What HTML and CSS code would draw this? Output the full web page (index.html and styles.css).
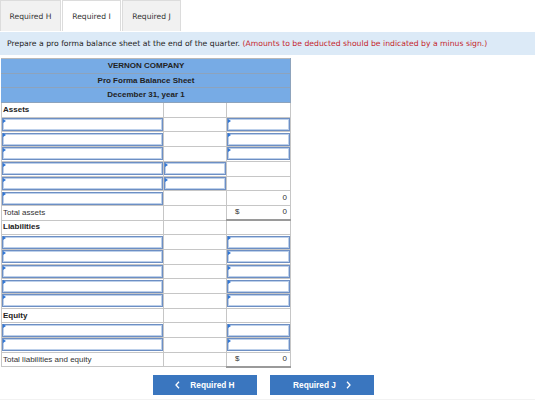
FILE: index.html
```html
<!DOCTYPE html>
<html lang="en">

<head>
    <meta charset="UTF-8">
    <title>Pro Forma Balance Sheet</title>
    <link rel="stylesheet" href="styles.css">
</head>

<body>
    <div class="tabs">
        <div class="tab">Required H</div>
        <div class="tab active">Required I</div>
        <div class="tab">Required J</div>
    </div>

    <div class="instructions">
        Prepare a pro forma balance sheet at the end of the quarter.
        <span class="note">(Amounts to be deducted should be indicated by a minus sign.)</span>
    </div>

    <table class="sheet">
        <colgroup>
            <col class="c1">
            <col class="c2">
            <col class="c3">
        </colgroup>
        <tr class="head first"><td colspan="3">VERNON COMPANY</td></tr>
        <tr class="head"><td colspan="3">Pro Forma Balance Sheet</td></tr>
        <tr class="head"><td colspan="3">December 31, year 1</td></tr>

        <tr><td class="label bold">Assets</td><td></td><td></td></tr>
        <tr><td class="in"><input type="text"></td><td></td><td class="in"><input type="text"></td></tr>
        <tr><td class="in"><input type="text"></td><td></td><td class="in"><input type="text"></td></tr>
        <tr><td class="in"><input type="text"></td><td></td><td class="in"><input type="text"></td></tr>
        <tr><td class="in"><input type="text"></td><td class="in"><input type="text"></td><td></td></tr>
        <tr><td class="in"><input type="text"></td><td class="in"><input type="text"></td><td></td></tr>
        <tr><td class="in"><input type="text"></td><td></td><td class="num"><span></span><span>0</span></td></tr>
        <tr><td class="label">Total assets</td><td></td><td class="num total"><span>$</span><span>0</span></td></tr>

        <tr><td class="label bold">Liabilities</td><td></td><td></td></tr>
        <tr><td class="in"><input type="text"></td><td></td><td class="in"><input type="text"></td></tr>
        <tr><td class="in"><input type="text"></td><td></td><td class="in"><input type="text"></td></tr>
        <tr><td class="in"><input type="text"></td><td></td><td class="in"><input type="text"></td></tr>
        <tr><td class="in"><input type="text"></td><td></td><td class="in"><input type="text"></td></tr>
        <tr><td class="in"><input type="text"></td><td></td><td class="in"><input type="text"></td></tr>

        <tr><td class="label bold">Equity</td><td></td><td></td></tr>
        <tr><td class="in"><input type="text"></td><td></td><td class="in"><input type="text"></td></tr>
        <tr><td class="in"><input type="text"></td><td></td><td class="in"><input type="text"></td></tr>
        <tr><td class="label">Total liabilities and equity</td><td></td><td class="num total"><span>$</span><span>0</span></td></tr>
    </table>

    <div class="nav">
        <button class="navbtn">
            <svg class="chev" width="5" height="8" viewBox="0 0 5 8"><path d="M4 0.8 L1 4 L4 7.2" fill="none" stroke="#fff" stroke-width="1.3"/></svg>
            Required H
        </button>
        <button class="navbtn">
            Required J
            <svg class="chev" width="5" height="8" viewBox="0 0 5 8"><path d="M1 0.8 L4 4 L1 7.2" fill="none" stroke="#fff" stroke-width="1.3"/></svg>
        </button>
    </div>
    <div class="rule"></div>
</body>

</html>
```

FILE: styles.css
```css
body {
    margin: 0;
    font-family: "DejaVu Sans", Verdana, sans-serif;
    color: #222;
    background-color: #fff;
}

/* tab strip */

.tabs {
    display: flex;
    height: 31px;
}

.tab {
    width: 59px;
    box-sizing: border-box;
    border: 1px solid #dcdcdc;
    border-bottom: none;
    background-color: #f1f1f1;
    font-size: 7.6px;
    line-height: 31px;
    text-align: center;
    color: #333;
}

.tab + .tab {
    margin-left: 1px;
}

.tab:first-child {
    width: 61px;
}

.tab.active {
    background-color: #fff;
}

.instructions {
    width: 535px;
    height: 23px;
    margin-top: 1px;
    padding-left: 7px;
    box-sizing: border-box;
    background-color: #dceaf7;
    font-size: 7.7px;
    line-height: 24px;
    color: #222;
}

.note {
    color: #c4262e;
}

/* balance sheet */

.sheet {
    margin: 3px 0 0 1px;
    border-collapse: collapse;
    table-layout: fixed;
    width: 289px;
    font-family: "Liberation Sans", Arial, sans-serif;
    font-size: 8px;
    color: #333;
}

.c1 {
    width: 162px;
}

.c2 {
    width: 63px;
}

.c3 {
    width: 64px;
}

.sheet tr {
    height: 14.7px;
}

.sheet td {
    padding: 0;
    border: 1px solid #c6c6c6;
    vertical-align: middle;
    line-height: 10px;
}

.head td {
    background-color: #77abe5;
    border: 1px solid #8da3bc;
    border-left-color: #77abe5;
    text-align: center;
    font-weight: bold;
    color: #222;
}

.head.first td {
    border-top-color: #b9b9b9;
}

.label {
    padding-left: 1px !important;
}

.bold {
    font-weight: bold;
    color: #222;
}

.in {
    position: relative;
}

.in input {
    display: block;
    width: 100%;
    height: 13px;
    margin: 0;
    padding: 0;
    box-sizing: border-box;
    border: 1px solid #6d8fc4;
    box-shadow: inset 0 0 0 1px #bdd0ea;
    background-color: #fff;
}

/* little marker in the corner of each entry box */
.in::before {
    content: "";
    position: absolute;
    left: 1px;
    top: 1px;
    border-left: 3px solid #2f77d6;
    border-top: 2px solid transparent;
    border-bottom: 2px solid transparent;
}

.num span:first-child {
    float: left;
    padding-left: 8px;
}

.num span:last-child {
    float: right;
    padding-right: 3px;
}

.total {
    border-bottom: 2px solid #9a9a9a !important;
}

/* navigation */

.nav {
    display: flex;
    justify-content: center;
    gap: 13px;
    width: 527px;
    margin-top: 7px;
}

.navbtn {
    display: flex;
    align-items: center;
    justify-content: center;
    gap: 10px;
    width: 104px;
    height: 20px;
    padding: 0;
    border: none;
    background-color: #3a76bf;
    color: #fff;
    font-family: "Liberation Sans", Arial, sans-serif;
    font-size: 8.3px;
    font-weight: bold;
    cursor: pointer;
}

.chev {
    display: block;
}

.rule {
    width: 535px;
    margin-top: 4px;
    border-top: 1px solid #f2f2f2;
}
```
